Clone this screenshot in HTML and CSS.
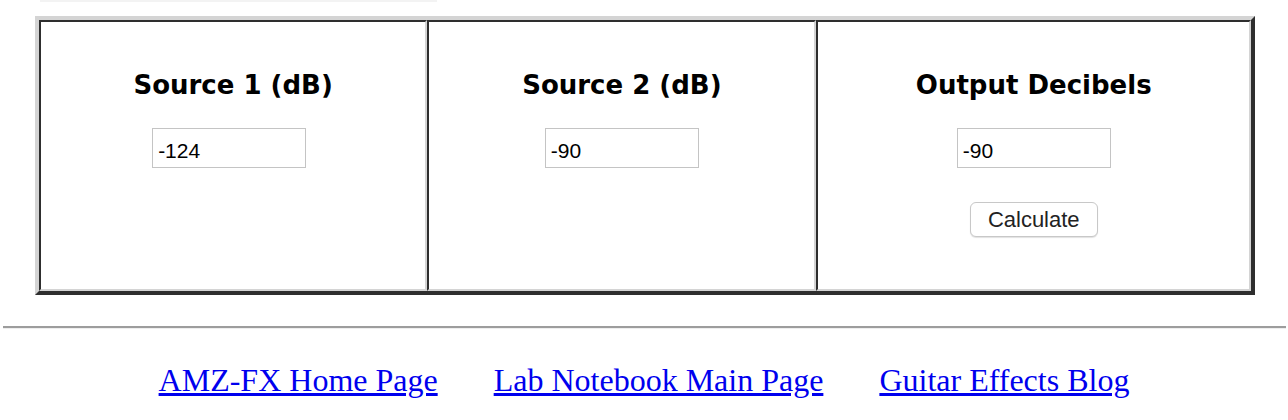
FILE: index.html
```html
<!DOCTYPE html>
<html lang="en">
<head>
    <meta charset="UTF-8">
    <title>Decibel Adder</title>
    <link rel="stylesheet" href="styles.css">
</head>
<body>
    <div class="top-edge"></div>

    <table class="calc">
        <tr>
            <td class="col-a">
                <h3>Source 1 (dB)</h3>
                <input type="text" class="shift" value="-124">
            </td>
            <td class="col-b">
                <h3>Source 2 (dB)</h3>
                <input type="text" value="-90">
            </td>
            <td class="col-c">
                <h3>Output Decibels</h3>
                <input type="text" value="-90">
                <button type="button">Calculate</button>
            </td>
        </tr>
    </table>

    <hr>

    <div class="links">
        <a href="#">AMZ-FX Home Page</a>
        <a href="#">Lab Notebook Main Page</a>
        <a href="#">Guitar Effects Blog</a>
    </div>
</body>
</html>
```

FILE: styles.css
```css
body {
    margin: 0;
    background: #fff;
    font-family: "Liberation Serif", "Times New Roman", serif;
}

.top-edge {
    width: 397px;
    height: 2px;
    margin-left: 40px;
    background: #f3f3f3;
}

.calc {
    margin: 14px 0 0 35px;
    width: 1220px;
    height: 279px;
    border-collapse: separate;
    border-spacing: 0;
    border: 4px solid;
    border-color: #d4d4d4 #2e2e2e #2e2e2e #d4d4d4;
    box-sizing: border-box;
}

.calc td {
    padding: 48px 0 0;
    vertical-align: top;
    text-align: center;
    border: 2px solid;
    border-color: #2e2e2e #d4d4d4 #d4d4d4 #2e2e2e;
}

.col-a { width: 388px; }
.col-b { width: 389px; }
.col-c { width: 435px; }

h3 {
    margin: 0 0 28px;
    font-family: Verdana, "DejaVu Sans", sans-serif;
    font-size: 26px;
    line-height: 30px;
    font-weight: bold;
    color: #000;
}

input[type="text"] {
    display: block;
    width: 154px;
    height: 40px;
    margin: 0 auto;
    padding: 6px 5px 0;
    box-sizing: border-box;
    border: 1px solid #c4c4c4;
    font-family: "Liberation Sans", Arial, sans-serif;
    font-size: 21px;
    color: #000;
    background: #fff;
}

input.shift {
    position: relative;
    left: -4px;
}

button {
    display: block;
    width: 128px;
    height: 35px;
    margin: 34px auto 0;
    padding: 1px 0 0;
    border: 1px solid #c8c8c8;
    border-radius: 6px;
    background: #fff;
    box-shadow: 0 1px 1px rgba(0, 0, 0, 0.12);
    font-family: "Liberation Sans", Arial, sans-serif;
    font-size: 22px;
    color: #222;
}

hr {
    margin: 31px 2px 0 3px;
    height: 0;
    border: 0;
    border-top: 2px solid #9d9d9d;
    border-bottom: 1px solid #eeeeee;
}

.links {
    margin-top: 33px;
    display: flex;
    justify-content: center;
    gap: 56px;
    font-size: 32px;
    line-height: 37px;
}

.links a {
    color: #0000ee;
}
```
